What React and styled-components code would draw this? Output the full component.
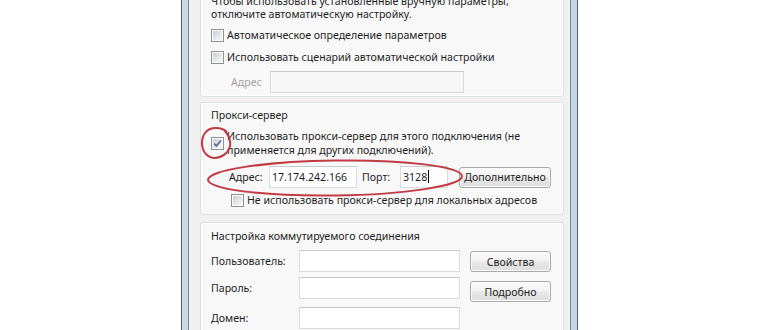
import React from "react";
import styled, { createGlobalStyle } from "styled-components";

const Global = createGlobalStyle`
  html, body { margin: 0; padding: 0; background: #ffffff; }
  body { font-family: "Noto Sans", "Open Sans", sans-serif; }
`;

const Page = styled.div`
  width: 770px;
  height: 330px;
  overflow: hidden;
  display: flex;
  align-items: flex-start;
  padding-left: 181px;
  box-sizing: border-box;
  background: #fff;
`;

const Window = styled.div`
  position: relative;
  margin-top: -20px;
  width: 397px;
  box-sizing: border-box;
  border: 1px solid #55606e;
  padding: 0 6px;
  background: linear-gradient(90deg, #c9d7e8 0%, #dbe6f2 50%, #c6d6ea 100%);
`;

const Client = styled.div`
  border: 1px solid #7d8896;
  background: #f0f0f0;
  padding: 6px 6px 20px 11px;
  display: flex;
  flex-direction: column;
  min-height: 380px;
`;

const Group = styled.div`
  margin-top: ${(p) => p.$mt || 0}px;
  border: 1px solid #dadfe3;
  border-radius: 3px;
  box-shadow: inset 0 0 0 1px #ffffff;
  background: #f8f8f8;
  padding: ${(p) => p.$pad};
  display: flex;
  flex-direction: column;
  font-size: 10.6px;
  line-height: 14px;
  color: #1e1e1e;
`;

const Text = styled.div`
  line-height: ${(p) => p.$lh || 14}px;
  white-space: nowrap;
`;

const CheckRow = styled.label`
  display: flex;
  align-items: ${(p) => (p.$multi ? "flex-start" : "center")};
  gap: 3px;
  margin-top: ${(p) => p.$mt || 0}px;
  padding-left: ${(p) => p.$pl || 0}px;
  white-space: nowrap;
`;

const Box = styled.span`
  flex: none;
  width: 13px;
  height: 13px;
  box-sizing: border-box;
  border: 1px solid #8e8f8f;
  margin-top: ${(p) => p.$mt || 0}px;
  background: #fff;
  position: relative;
  display: inline-flex;
  align-items: center;
  justify-content: center;
  &::before {
    content: "";
    position: absolute;
    inset: 1px;
    background: linear-gradient(135deg, #c9ccd2 0%, #e6e7ea 55%, #f6f6f6 100%);
  }
  svg { position: relative; }
`;

const Check = ({ checked }) => (
  <Box $mt={checked ? 8 : 0}>
    {checked && (
      <svg width="9" height="9" viewBox="0 0 9 9">
        <path d="M1.2 4.6 L3.4 7 L7.8 1.4" fill="none" stroke="#5065a8" strokeWidth="1.6" />
      </svg>
    )}
  </Box>
);

const Row = styled.div`
  display: flex;
  align-items: center;
  margin-top: ${(p) => p.$mt || 0}px;
  padding-left: ${(p) => p.$pl || 0}px;
  white-space: nowrap;
`;

const Label = styled.span`
  width: ${(p) => p.$w}px;
  margin-left: ${(p) => p.$ml || 0}px;
  flex: none;
  color: ${(p) => (p.$disabled ? "#a3a3a3" : "#1e1e1e")};
`;

const Input = styled.div`
  flex: none;
  width: ${(p) => p.$w}px;
  height: ${(p) => p.$h || 22}px;
  box-sizing: border-box;
  border: 1px solid #d9dbde;
  border-top-color: #c8cacd;
  background: ${(p) => (p.$disabled ? "#f7f7f7" : "#ffffff")};
  padding: 3px 2px 0 2px;
  color: #1e1e1e;
  overflow: hidden;
  display: flex;
  align-items: flex-start;
`;

const Caret = styled.span`
  display: inline-block;
  width: 1px;
  height: 13px;
  background: #000;
  margin-left: 1px;
`;

const Button = styled.div`
  flex: none;
  width: ${(p) => p.$w}px;
  height: 21px;
  box-sizing: border-box;
  border: 1px solid #a9a9a9;
  border-radius: 3px;
  background: linear-gradient(180deg, #fbfbfb 0%, #f2f2f2 45%, #e6e6e6 55%, #dedede 100%);
  box-shadow: inset 0 0 0 1px #fbfbfb;
  margin-left: ${(p) => p.$ml || 0}px;
  margin-top: ${(p) => p.$mt || 0}px;
  display: flex;
  align-items: center;
  justify-content: center;
  color: #1e1e1e;
`;

const DialGrid = styled.div`
  display: grid;
  grid-template-columns: 78px 161px 81px;
  column-gap: 10px;
  row-gap: 5px;
  margin-top: 7px;
  align-items: start;
`;

const GridLabel = styled.span`
  line-height: 22px;
  white-space: nowrap;
`;

const Annotation = styled.svg`
  position: absolute;
  left: ${(p) => p.$x}px;
  top: ${(p) => p.$y}px;
  overflow: visible;
  pointer-events: none;
`;

export default function App() {
  return (
    <>
      <Global />
      <Page>
        <Window>
          <Client>
            <Group $pad="6px 10px 3px 10px">
              <Text $lh={13}>Чтобы использовать установленные вручную параметры,</Text>
              <Text $lh={13}>отключите автоматическую настройку.</Text>
              <CheckRow $mt={7}>
                <Check />
                <span>Автоматическое определение параметров</span>
              </CheckRow>
              <CheckRow $mt={8}>
                <Check />
                <span>Использовать сценарий автоматической настройки</span>
              </CheckRow>
              <Row $mt={7} $pl={20}>
                <Label $w={39} $disabled>Адрес</Label>
                <Input $w={194} $disabled />
              </Row>
            </Group>

            <Group $mt={5} $pad="5px 10px 7px 10px">
              <Text>Прокси-сервер</Text>
              <CheckRow $mt={7} $multi>
                <Check checked />
                <span>
                  Использовать прокси-сервер для этого подключения (не
                  <br />
                  применяется для других подключений).
                </span>
              </CheckRow>
              <Row $mt={9} $pl={18}>
                <Label $w={40}>Адрес:</Label>
                <Input $w={88}>17.174.242.166</Input>
                <Label $w={38} $ml={5}>Порт:</Label>
                <Input $w={48}>
                  3128
                  <Caret />
                </Input>
                <Button $w={92} $ml={11}>Дополнительно</Button>
              </Row>
              <CheckRow $mt={5} $pl={20}>
                <Check />
                <span>Не использовать прокси-сервер для локальных адресов</span>
              </CheckRow>
            </Group>

            <Group $mt={7} $pad="6px 10px 10px 10px">
              <Text>Настройка коммутируемого соединения</Text>
              <DialGrid>
                <GridLabel>Пользователь:</GridLabel>
                <Input $w={161} />
                <Button $w={81} $mt={1}>Свойства</Button>
                <GridLabel>Пароль:</GridLabel>
                <Input $w={161} />
                <Button $w={81} $mt={4}>Подробно</Button>
                <GridLabel>Домен:</GridLabel>
                <Input $w={161} />
                <span />
              </DialGrid>
            </Group>
          </Client>

          <Annotation $x={18} $y={145} width="32" height="34">
            <path
              d="M27 6 C22 1 10 0 5 7 C0 14 1 27 10 31 C18 34 28 29 30 20 C31 14 29 9 24 4"
              fill="none"
              stroke="#c23a43"
              strokeWidth="2"
            />
          </Annotation>
          <Annotation $x={23} $y={177} width="260" height="40">
            <ellipse
              cx="130"
              cy="20"
              rx="127"
              ry="17.5"
              fill="none"
              stroke="#c23a43"
              strokeWidth="2"
              transform="rotate(-0.8 130 20)"
            />
          </Annotation>
        </Window>
      </Page>
    </>
  );
}
